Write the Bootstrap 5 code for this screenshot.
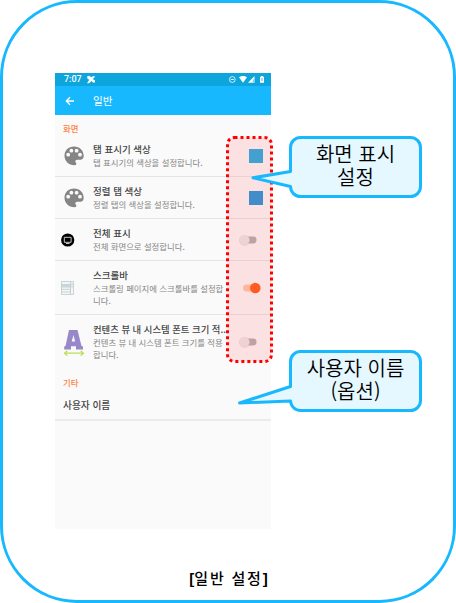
<!DOCTYPE html>
<html lang="ko">
<head>
<meta charset="utf-8">
<meta name="viewport" content="width=device-width, initial-scale=1">
<title>일반 설정</title>
<link href="https://cdn.jsdelivr.net/npm/bootstrap@5.3.0/dist/css/bootstrap.min.css" rel="stylesheet">
<style>
body{font-family:"Noto Sans CJK KR",sans-serif;background:#fff;overflow:hidden}
.sheet{width:456px;height:603px;border:3px solid #18b8ff;border-radius:77px;padding:70px 0 0 52px}
.phone{width:216px;height:456px;background:#fafafa;color:#444}
.status{height:13px;background:#0ea5dc;color:#fff;font:500 9px/13px Roboto,sans-serif;padding:0 5px 0 9px}
.appbar{height:29px;background:#18b8ff;color:#fff;font-size:10.6px;font-weight:400;padding-left:9px}
.appbar span{margin-left:17px}
.group-label{color:#ff8040;font-size:8.4px;font-weight:500;line-height:11px;height:20px;padding:8px 0 0 8px}
.setting{height:42px;border-bottom:1px solid #e4e4e4}
.setting.tall{height:54px}
.setting.final{border-bottom-color:transparent}
.pic{width:38px;flex:none}
.copy{width:136px;flex:none;white-space:nowrap}
.ttl{font-size:9.5px;font-weight:500;line-height:13px}
.final .ttl{font-size:9.35px}
.desc{font-size:8.38px;line-height:12.3px;color:#858585}
.ctl{width:42px;flex:none}
.swatch{width:14px;height:14px;margin-left:20px;background:#0aa5e4}
.swatch.deep{background:#098bdb}
.toggle{width:20px;height:12px;margin-left:9px;overflow:visible}
.user-row{height:32px;border-bottom:2px solid #ebebeb;padding:2px 0 0 8px}
.user-row.ttl{font-size:9.7px}
.notes{left:0;top:0;width:456px;height:603px;pointer-events:none}
.bubble{left:289px;width:133px;height:62px;font-size:20px;line-height:23px;font-weight:350;color:#000;padding-bottom:5px}
.b1{top:136px}.b2{top:350px}
.figcap{width:347px;padding-top:39px;font-size:15px;line-height:20px;font-weight:500;color:#000;letter-spacing:1.8px}
.figcap b{font-family:"Liberation Sans",sans-serif;letter-spacing:0}
</style>
<script src="https://cdn.jsdelivr.net/npm/bootstrap@5.3.0/dist/js/bootstrap.bundle.min.js"></script>
</head>
<body>
<svg class="d-none">
<symbol id="palette" viewBox="0 0 20 20"><path fill="#858585" d="M10 .6C4.600.6.5 4.500.5 9.800c0 5.300 4.300 9.500 9.800 9.500 2.300 0 2.400-1.500 1.600-2.500-1.100-1.500-.7-3.100 1.500-3.100h2.900c2 0 3.400-1.500 3.400-3.700C19.700 4.600 15.700.6 10 .6z"/><g fill="#fafafa"><circle cx="4.200" cy="8.700" r="1.900"/><circle cx="7.400" cy="4.700" r="1.900"/><circle cx="12.600" cy="4.700" r="1.900"/><circle cx="16" cy="8.700" r="1.900"/></g></symbol>
<symbol id="off" viewBox="0 0 20 12"><rect x="6" y="2.500" width="12.500" height="7" rx="3.500" fill="#aaa6a6"/><circle cx="6.500" cy="6.300" r="5.400" fill="#bbb" opacity=".5"/><circle cx="6.500" cy="6" r="5" fill="#e8e8e8"/></symbol>
</svg>
<main class="sheet position-relative">
<section class="phone">
  <div class="status d-flex align-items-center justify-content-between">
    <div class="d-flex align-items-center"><span>7:07</span>
      <svg class="ms-1" width="10" height="9" viewBox="0 0 10 9"><path d="M1 1.500l2.500-.7L5 2.300 7.500 1l1.700.7-2.500 2.200L9 5.500v2H7L5.500 6 3 8.200H1l2.300-3.500L1.500 3.800z" fill="#fff"/></svg></div>
    <svg width="38" height="9" viewBox="0 0 38 9" fill="#fff"><circle cx="4.300" cy="4.500" r="2.900" fill="none" stroke="#fff" stroke-width=".8"/><path d="M2.800 4.100h3v.8h-3zM11 2.300q4-2.400 8 0L15 7.800zM26.500 1v6.800H20z"/><path d="M24.700 4.300v3.500h1.800V4.300z" fill="#83cfee"/><path d="M32 1.800h1V1h2v.8h1v6h-4z"/><path d="M33.600 3h.8v3h-.8z" fill="#0ea5dc"/></svg>
  </div>
  <header class="appbar d-flex align-items-center">
    <svg width="12" height="12" viewBox="0 0 12 12"><path d="M10 6H2.500M6 2.300L2.300 6 6 9.700" fill="none" stroke="#fff" stroke-width="1.300"/></svg><span>일반</span>
  </header>
  <div class="group-label">화면</div>
  <div class="setting d-flex align-items-center"><div class="pic ps-2"><svg class="d-block" width="22" height="20"><use href="#palette" width="20" height="20" x="1"/></svg></div><div class="copy"><div class="ttl">탭 표시기 색상</div><div class="desc">탭 표시기의 색상을 설정합니다.</div></div><div class="ctl"><div class="swatch"></div></div></div>
  <div class="setting d-flex align-items-center"><div class="pic ps-2"><svg class="d-block" width="22" height="20"><use href="#palette" width="20" height="20" x="1"/></svg></div><div class="copy"><div class="ttl">정렬 탭 색상</div><div class="desc">정렬 탭의 색상을 설정합니다.</div></div><div class="ctl"><div class="swatch deep"></div></div></div>
  <div class="setting d-flex align-items-center"><div class="pic"><svg class="d-block" width="24" height="14"><circle cx="12.700" cy="7" r="6.600"/><path d="M9.300 4.300h6.800v5H9.300zM11 10.500h3.500" fill="none" stroke="#ddd" stroke-width=".9"/></svg></div><div class="copy"><div class="ttl">전체 표시</div><div class="desc">전체 화면으로 설정합니다.</div></div><div class="ctl"><svg class="toggle d-block"><use href="#off"/></svg></div></div>
  <div class="setting tall d-flex align-items-center"><div class="pic"><svg class="d-block" width="24" height="16"><g fill="#f3f6f6" stroke="#bccaca" stroke-width=".8"><path d="M6.500 1.500h12v13h-12zM15.500 1.500v13"/><path d="M6.500 4.500h9M6.500 7h9M6.500 9.300h9M6.500 12h9"/></g><path d="M7 5h8.500v2H7z" fill="#c5d9dc"/><path d="M16.300 3h1.400v5h-1.400z" fill="#d5e0e0"/></svg></div><div class="copy"><div class="ttl">스크롤바</div><div class="desc">스크롤링 페이지에 스크롤바를 설정합<br>니다.</div></div><div class="ctl"><svg class="toggle d-block" viewBox="0 0 20 12"><rect x="5" y="2.500" width="13" height="7" rx="3.500" fill="#ffc3a0"/><circle cx="17.300" cy="6" r="5.300" fill="#ff4c00"/></svg></div></div>
  <div class="setting tall final d-flex align-items-center"><div class="pic"><svg class="d-block" width="32" height="28"><path fill="#9988c9" fill-rule="evenodd" d="M9.200 21.500V18.500l1.300-.5L14 2h8.500L26.500 18l1.500.5v3h-7v-3.200h-5v3.200zM16.700 13.500h3.400L18.500 7z"/><path d="M10 25.200h18M12.300 22.700L9.500 25.200l2.800 2.500M25.700 22.700l2.800 2.500-2.800 2.500" fill="none" stroke="#b9df57" stroke-width="1.200"/></svg></div><div class="copy"><div class="ttl">컨텐츠 뷰 내 시스템 폰트 크기 적..</div><div class="desc">컨텐츠 뷰 내 시스템 폰트 크기를 적용<br>합니다.</div></div><div class="ctl"><svg class="toggle d-block"><use href="#off"/></svg></div></div>
  <div class="group-label">기타</div>
  <div class="user-row d-flex align-items-center ttl">사용자 이름</div>
</section>
<div class="figcap text-center"><b>[</b>일반 설정<b>]</b></div>
</main>
<svg class="notes position-absolute" viewBox="0 0 456 603">
<rect x="227.500" y="137.500" width="44" height="224" rx="7" fill="#ff9298" fill-opacity=".24" stroke="#f00" stroke-width="3" stroke-dasharray="3 3"/>
<g fill="#e5f7ff" stroke="#18b8ff" stroke-width="3" stroke-linejoin="round">
<path d="M300.500 137.500h110a10 10 0 0 1 10 10v39a10 10 0 0 1-10 10h-110a10 10 0 0 1-10-10L253 177.800l37.500-6.300v-24a10 10 0 0 1 10-10z"/>
<path d="M300.500 351.500h110a10 10 0 0 1 10 10v39a10 10 0 0 1-10 10h-110a10 10 0 0 1-10-9.500L239.500 403l51-16.500v-25a10 10 0 0 1 10-10z"/>
</g></svg>
<div class="bubble b1 position-absolute d-flex align-items-center justify-content-center text-center"><div>화면 표시<br>설정</div></div>
<div class="bubble b2 position-absolute d-flex align-items-center justify-content-center text-center"><div>사용자 이름<br>(옵션)</div></div>
</body>
</html>
